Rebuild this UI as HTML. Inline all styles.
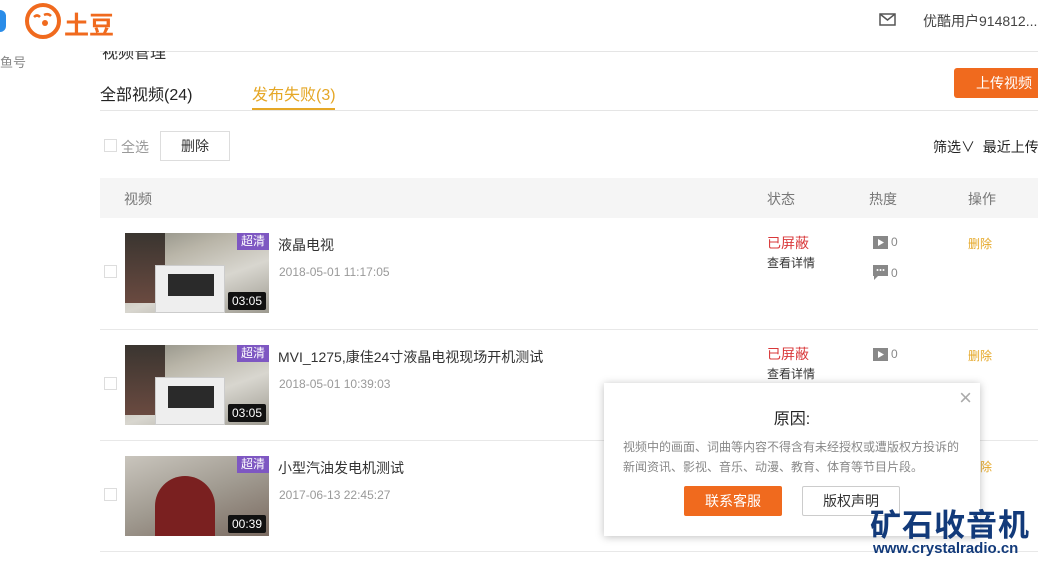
<!DOCTYPE html>
<html><head><meta charset="utf-8"><style>
*{margin:0;padding:0;box-sizing:border-box}
body{width:1038px;height:561px;overflow:hidden;background:#fff;font-family:"Liberation Sans","Noto Sans CJK SC",sans-serif;position:relative;color:#333}
.a{position:absolute;white-space:nowrap}
.cb{position:absolute;width:13px;height:13px;border:1px solid #ddd;background:#fff}
.th{position:absolute;left:125px;width:144px;height:80px;overflow:hidden;background:linear-gradient(160deg,#8a8a80 0%,#b9b5a8 30%,#d8d6cf 60%,#9d9a90 100%)}
.box{position:absolute;left:30px;top:32px;width:70px;height:48px;background:#eee;border:1px solid #ccc}
.box i{position:absolute;left:12px;top:8px;width:46px;height:22px;background:#2a2a2a}
.man{position:absolute;left:0;top:0;width:40px;height:70px;background:linear-gradient(#3a3530,#6a4a40)}
.hd{position:absolute;right:0;top:0;background:#7e57c2;color:#fff;font-size:12px;padding:1px 4px;height:17px;line-height:15px}
.du{position:absolute;right:3px;bottom:3px;background:#111;color:#fff;font-size:12px;padding:0 4px;height:18px;line-height:18px;border-radius:2px}
.ic{position:absolute}
</style></head><body>
<!-- header -->
<div class="a" style="left:-8px;top:10px;width:14px;height:22px;background:#2a8ce8;border-radius:6px"></div>
<svg class="a" style="left:24px;top:2px" width="38" height="38" viewBox="0 0 38 38"><circle cx="19" cy="19" r="16" fill="none" stroke="#f06a1e" stroke-width="4"/><path d="M10 15q3-3 6 0M20 13q4-2 7 1" stroke="#f06a1e" stroke-width="2.5" fill="none"/><circle cx="21" cy="21" r="3" fill="#f06a1e"/></svg>
<div class="a" style="left:64px;top:6px;font-size:25px;font-weight:bold;color:#f06a1e">土豆</div>
<div class="a" style="left:0;top:52px;font-size:13px;color:#888">鱼号</div>
<svg class="a" style="left:879px;top:13px" width="17" height="13" viewBox="0 0 17 13"><rect x="1" y="1" width="15" height="11" fill="none" stroke="#555" stroke-width="1.5"/><path d="M1 1l7.5 6 7.5-6" fill="none" stroke="#555" stroke-width="1.5"/></svg>
<div class="a" style="left:923px;top:11px;font-size:14px;color:#444">优酷用户914812...</div>
<div class="a" style="left:100px;top:51px;width:938px;height:1px;background:#e5e5e5"></div>
<div class="a" style="left:102px;top:39px;font-size:16px;color:#333;clip-path:inset(12px 0 0 0)">视频管理</div>
<!-- tabs -->
<div class="a" style="left:100px;top:81px;font-size:16px;color:#222">全部视频(24)</div>
<div class="a" style="left:252px;top:81px;font-size:16px;color:#e5a726">发布失败(3)</div>
<div class="a" style="left:252px;top:108px;width:83px;height:2px;background:#e5a726"></div>
<div class="a" style="left:100px;top:110px;width:938px;height:1px;background:#e5e5e5"></div>
<div class="a" style="left:954px;top:68px;width:90px;height:30px;background:#f06a1e;border-radius:3px;color:#fff;font-size:14px;line-height:30px;padding-left:22px">上传视频</div>
<!-- toolbar -->
<div class="cb" style="left:104px;top:139px"></div>
<div class="a" style="left:121px;top:137px;font-size:14px;color:#999">全选</div>
<div class="a" style="left:160px;top:131px;width:70px;height:30px;border:1px solid #ddd;font-size:14px;line-height:28px;text-align:center">删除</div>
<div class="a" style="left:933px;top:137px;font-size:14px;color:#222">筛选∨ &nbsp;最近上传</div>
<!-- table head -->
<div class="a" style="left:100px;top:178px;width:938px;height:40px;background:#f5f5f5"></div>
<div class="a" style="left:124px;top:189px;font-size:14px;color:#777">视频</div>
<div class="a" style="left:767px;top:189px;font-size:14px;color:#777">状态</div>
<div class="a" style="left:869px;top:189px;font-size:14px;color:#777">热度</div>
<div class="a" style="left:968px;top:189px;font-size:14px;color:#777">操作</div>

<!-- row1 -->
<div class="cb" style="left:104px;top:265px"></div>
<div class="th" style="top:233px"><div class="man"></div><div class="box"><i></i></div><div class="hd">超清</div><div class="du">03:05</div></div>
<div class="a" style="left:278px;top:235px;font-size:14px">液晶电视</div>
<div class="a" style="left:279px;top:265px;font-size:12px;color:#999">2018-05-01 11:17:05</div>
<div class="a" style="left:767px;top:233px;font-size:14px;color:#d9383a">已屏蔽</div>
<div class="a" style="left:767px;top:254px;font-size:12px">查看详情</div>
<svg class="ic" style="left:873px;top:236px" width="15" height="13"><rect width="15" height="13" fill="#888"/><path d="M5 3l6 3.5-6 3.5z" fill="#fff"/></svg><div class="a" style="left:891px;top:235px;font-size:12px;color:#888">0</div>
<svg class="ic" style="left:873px;top:265px" width="15" height="15"><path d="M0 0h15v11H5l-4 4v-4H0z" fill="#888"/><circle cx="4.5" cy="5" r="1" fill="#fff"/><circle cx="7.5" cy="5" r="1" fill="#fff"/><circle cx="10.5" cy="5" r="1" fill="#fff"/></svg><div class="a" style="left:891px;top:266px;font-size:12px;color:#888">0</div>
<div class="a" style="left:968px;top:235px;font-size:12px;color:#e5a726">删除</div>
<div class="a" style="left:100px;top:329px;width:938px;height:1px;background:#e8e8e8"></div>
<!-- row2 -->
<div class="cb" style="left:104px;top:377px"></div>
<div class="th" style="top:345px"><div class="man"></div><div class="box"><i></i></div><div class="hd">超清</div><div class="du">03:05</div></div>
<div class="a" style="left:278px;top:347px;font-size:14px">MVI_1275,康佳24寸液晶电视现场开机测试</div>
<div class="a" style="left:279px;top:377px;font-size:12px;color:#999">2018-05-01 10:39:03</div>
<div class="a" style="left:767px;top:344px;font-size:14px;color:#d9383a">已屏蔽</div>
<div class="a" style="left:767px;top:365px;font-size:12px">查看详情</div>
<svg class="ic" style="left:873px;top:348px" width="15" height="13"><rect width="15" height="13" fill="#888"/><path d="M5 3l6 3.5-6 3.5z" fill="#fff"/></svg><div class="a" style="left:891px;top:347px;font-size:12px;color:#888">0</div>
<div class="a" style="left:968px;top:347px;font-size:12px;color:#e5a726">删除</div>
<div class="a" style="left:100px;top:440px;width:938px;height:1px;background:#e8e8e8"></div>
<!-- row3 -->
<div class="cb" style="left:104px;top:488px"></div>
<div class="th" style="top:456px;background:linear-gradient(160deg,#c9c5bd,#a09a90 50%,#7a6a60)"><div class="man" style="left:30px;top:20px;width:60px;height:60px;background:#7a2020;border-radius:30px 30px 0 0"></div><div class="hd">超清</div><div class="du">00:39</div></div>
<div class="a" style="left:278px;top:458px;font-size:14px">小型汽油发电机测试</div>
<div class="a" style="left:279px;top:488px;font-size:12px;color:#999">2017-06-13 22:45:27</div>
<div class="a" style="left:980px;top:458px;font-size:12px;color:#e5a726">除</div>
<div class="a" style="left:100px;top:551px;width:938px;height:1px;background:#e8e8e8"></div>
<!-- popup -->
<div class="a" style="left:604px;top:383px;width:376px;height:153px;background:#fff;box-shadow:0 1px 8px rgba(0,0,0,.25)">
<div class="a" style="right:8px;top:2px;font-size:22px;color:#aaa">×</div>
<div class="a" style="left:0;width:376px;text-align:center;top:22px;font-size:16px;color:#222">原因:</div>
<div class="a" style="left:19px;top:54px;font-size:12px;color:#888;line-height:20px">视频中的画面、词曲等内容不得含有未经授权或遭版权方投诉的<br>新闻资讯、影视、音乐、动漫、教育、体育等节目片段。</div>
<div class="a" style="left:80px;top:103px;width:98px;height:30px;background:#f06a1e;border-radius:2px;color:#fff;font-size:14px;line-height:30px;text-align:center">联系客服</div>
<div class="a" style="left:198px;top:103px;width:98px;height:30px;border:1px solid #ccc;border-radius:2px;font-size:14px;line-height:28px;text-align:center">版权声明</div>
</div>
<!-- watermark -->
<div class="a" style="left:870px;top:500px;font-size:31px;font-weight:bold;color:#123a7a;letter-spacing:1px">矿石收音机</div>
<div class="a" style="left:873px;top:540px;font-size:15px;font-weight:bold;color:#123a7a">www.crystalradio.cn</div>
</body></html>
